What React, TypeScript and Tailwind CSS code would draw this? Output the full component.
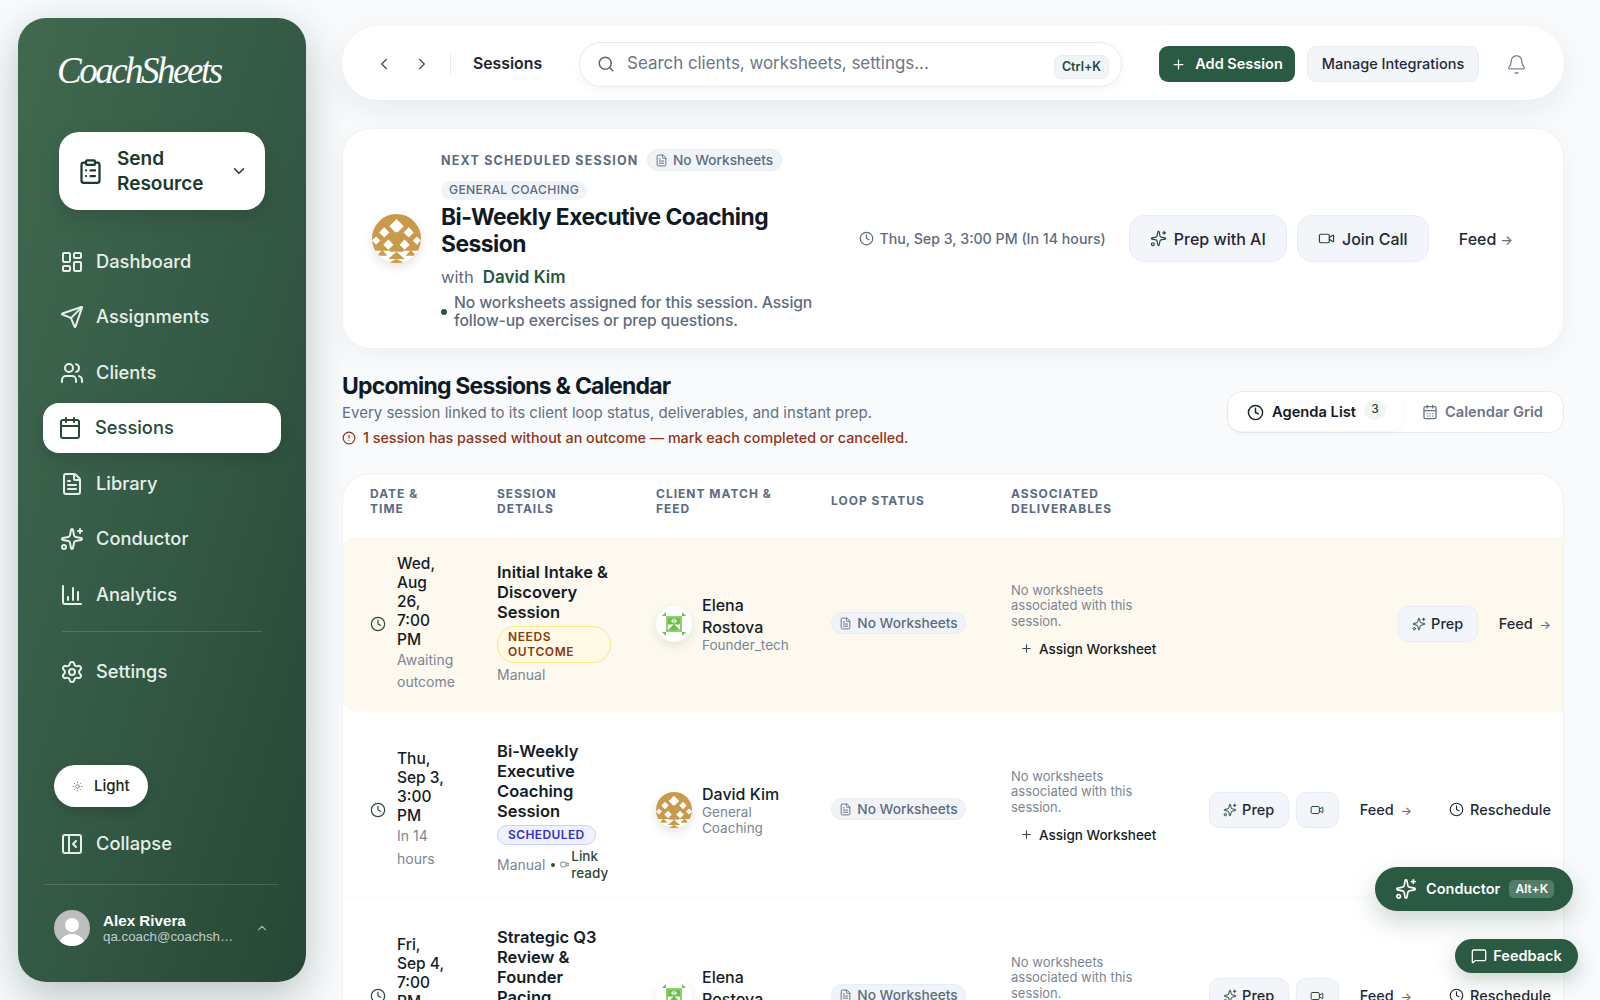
import {
  BarChart3,
  Bell,
  Calendar,
  CalendarDays,
  ChevronDown,
  ChevronLeft,
  ChevronRight,
  ChevronUp,
  CircleAlert,
  ClipboardList,
  Clock,
  FileText,
  LayoutDashboard,
  MessageSquare,
  PanelLeftClose,
  Plus,
  Search,
  Send,
  Settings,
  Sparkles,
  Sun,
  Users,
  Video,
} from "lucide-react";

const whiteDiamonds = [
  [24, 12, 7],
  [12, 18, 5],
  [36, 18, 5],
  [16, 30, 5],
  [32, 30, 5],
  [4, 26, 4],
  [44, 26, 4],
];

function GoldAvatar({ size }: { size: number }) {
  return (
    <div className="rounded-full bg-white shadow-[0_4px_10px_rgba(15,40,30,0.12)] shrink-0 overflow-hidden" style={{ width: size, height: size }}>
      <svg viewBox="0 0 48 48" width={size} height={size}>
        <rect width="48" height="36" fill="#c99a4b" />
        {whiteDiamonds.map(([x, y, r]) => (
          <polygon key={`${x}-${y}`} points={`${x},${y - r} ${x + r},${y} ${x},${y + r} ${x - r},${y}`} fill="#fff" />
        ))}
        <polygon points="24,17 30,24 24,31 18,24" fill="#c99a4b" />
        <polygon points="24,30 31,37 17,37" fill="#c99a4b" />
        <polygon points="24,37 32,44 16,44" fill="#c99a4b" />
        <polygon points="24,44 32,48 16,48" fill="#c99a4b" />
        <polygon points="10,35 15,41 5,41" fill="#c99a4b" />
        <polygon points="38,35 43,41 33,41" fill="#c99a4b" />
      </svg>
    </div>
  );
}

function GreenAvatar() {
  return (
    <div className="rounded-full bg-white shadow-[0_4px_10px_rgba(15,40,30,0.1)] shrink-0 w-[36px] h-[36px]">
      <svg viewBox="0 0 36 36" width="36" height="36">
        <rect x="11" y="11" width="14" height="14" fill="#fff" stroke="#6cc04a" strokeWidth="1.5" />
        <path d="M18 11v14M11 18h14" stroke="#6cc04a" strokeWidth="1" />
        <path d="M12 12 18 18 12 18z M24 12 18 18 24 18z M12 24 18 18 18 24z M24 24 18 18 18 24z M12 12h6l-6 6z M24 12h-6l6 6z" fill="#6cc04a" />
        <path d="M6 10 10 6v4z M30 10 26 6v4z M6 26 10 30v-4z M30 26 26 30v-4z" fill="#6cc04a" />
      </svg>
    </div>
  );
}

function ProfileAvatar() {
  return (
    <div className="w-[36px] h-[36px] rounded-full bg-[#bdbdbd] overflow-hidden shrink-0">
      <svg viewBox="0 0 36 36" width="36" height="36">
        <circle cx="18" cy="15" r="7" fill="#fff" />
        <path d="M5 36c1-9 7-12 13-12s12 3 13 12z" fill="#fff" />
      </svg>
    </div>
  );
}

const navTop = [
  { label: "Dashboard", icon: LayoutDashboard },
  { label: "Assignments", icon: Send },
  { label: "Clients", icon: Users },
  { label: "Sessions", icon: Calendar, active: true },
  { label: "Library", icon: FileText },
  { label: "Conductor", icon: Sparkles },
  { label: "Analytics", icon: BarChart3 },
];

function NavItem({ label, icon: Icon, active }: { label: string; icon: typeof Send; active?: boolean }) {
  if (active) {
    return (
      <div className="flex items-center gap-[13px] h-[50px] rounded-[16px] bg-white pl-[15px] text-[#264a38] shadow-[0_6px_16px_rgba(0,0,0,0.12)]">
        <Icon size={24} strokeWidth={2} />
        <span className="text-[18.3px] font-medium">{label}</span>
      </div>
    );
  }
  return (
    <div className="flex items-center gap-[12px] h-[50px] pl-[17px] text-[#e6efe9]">
      <Icon size={24} strokeWidth={2} />
      <span className="text-[18.3px] font-medium">{label}</span>
    </div>
  );
}

function Sidebar() {
  return (
    <aside className="w-[288px] shrink-0 my-[18px] ml-[18px] rounded-[28px] bg-gradient-to-br from-[#40694f] via-[#345a45] to-[#264735] shadow-[0_14px_40px_rgba(30,60,50,0.28)] flex flex-col px-[25px] pb-[36px]">
      <div className="h-[114px] pl-[14px] pt-[28px] text-white font-['Liberation_Serif',serif] italic text-[37px] leading-[50px] tracking-[-2.5px]">
        CoachSheets
      </div>
      <div className="mx-[16px] h-[78px] rounded-[20px] bg-white flex items-center pl-[18px] pr-[17px] text-[#1c3a2c] shadow-[0_8px_20px_rgba(0,0,0,0.12)]">
        <ClipboardList size={27} strokeWidth={2} className="shrink-0" />
        <span className="ml-[13px] w-[100px] text-[19px] leading-[25px] font-semibold">Send Resource</span>
        <ChevronDown size={18} className="ml-auto" />
      </div>
      <nav className="mt-[26.5px] flex flex-col gap-[5.5px]">
        {navTop.map((n) => (
          <NavItem key={n.label} {...n} />
        ))}
      </nav>
      <div className="mx-[19px] mt-[11px] mb-[15px] h-px bg-white/15" />
      <NavItem label="Settings" icon={Settings} />
      <div className="mt-auto ml-[11px] w-[94px] h-[42px] rounded-full bg-white flex items-center gap-[11px] pl-[18px] text-[#1a2421] text-[15px] font-medium shadow-[0_4px_12px_rgba(0,0,0,0.15)]">
        <Sun size={11} className="text-[#8a8a8a]" />
        Light
      </div>
      <div className="mt-[12px]">
        <NavItem label="Collapse" icon={PanelLeftClose} />
      </div>
      <div className="mx-[2px] mt-[15px] h-px bg-white/15" />
      <div className="mt-[25px] ml-[11px] flex items-center">
        <ProfileAvatar />
        <div className="ml-[13px] w-[134px] font-['Liberation_Sans',sans-serif]">
          <div className="text-[15.2px] leading-[16px] font-bold text-white">Alex Rivera</div>
          <div className="text-[13.3px] leading-[15px] text-[#c0cdc6] truncate">qa.coach@coachsheets.com</div>
        </div>
        <ChevronUp size={14} className="ml-[18px] text-[#9db0a6]" />
      </div>
    </aside>
  );
}

function TopBar() {
  return (
    <header className="h-[74px] rounded-[37px] bg-white shadow-[0_10px_30px_rgba(20,50,40,0.07)] flex items-center pt-[2px] pl-[33px] pr-[37px]">
      <ChevronLeft size={18} className="text-[#4b5563]" />
      <ChevronRight size={18} className="ml-[20px] text-[#4b5563]" />
      <div className="ml-[19px] w-px h-[20px] bg-[#e5e9ee]" />
      <span className="ml-[22px] text-[15.8px] font-semibold text-[#1b2530]">Sessions</span>
      <div className="ml-[37px] w-[543px] h-[45px] rounded-full border border-[#e8ecf1] bg-white flex items-center pl-[17px] pr-[12px] shadow-[0_3px_10px_rgba(20,50,40,0.05)]">
        <Search size={18} className="text-[#5d6876]" />
        <span className="ml-[12px] text-[16.9px] text-[#6b7686]">Search clients, worksheets, settings...</span>
        <span className="ml-auto mt-[6px] w-[55px] h-[24px] rounded-[7px] bg-[#f1f5f8] border border-[#e8edf2] flex items-center justify-center text-[12.5px] font-semibold text-[#264a38]">Ctrl+K</span>
      </div>
      <button className="ml-[37px] w-[136px] h-[36px] rounded-[9px] bg-[#2a5a42] text-white flex items-center justify-center gap-[9px] text-[14.5px] font-semibold">
        <Plus size={15} />
        Add Session
      </button>
      <button className="ml-[12px] w-[172px] h-[36px] rounded-[9px] bg-[#f3f6f9] border border-[#e8edf2] text-[#1f2937] text-[14.5px] font-medium">
        Manage Integrations
      </button>
      <Bell size={21} strokeWidth={1.5} className="ml-[27px] text-[#7c8696]" />
    </header>
  );
}

function WorksheetPill() {
  return (
    <span className="inline-flex items-center justify-center gap-[5px] w-[135px] h-[22px] rounded-full bg-[#f0f4f8] border border-[#e8edf3] text-[13.7px] font-medium text-[#5f6c7e]">
      <FileText size={13} strokeWidth={1.7} />
      No Worksheets
    </span>
  );
}

function Hero() {
  return (
    <section className="mt-[28px] h-[221px] rounded-[28px] bg-white border border-[#eef1f5] shadow-[0_8px_24px_rgba(20,50,40,0.04)] flex items-center pl-[29px] pr-[50px]">
      <GoldAvatar size={49} />
      <div className="ml-[20px] mt-[1px] w-[380px]">
        <div className="flex items-center gap-[8px]">
          <span className="text-[12.5px] font-bold tracking-[1.2px] text-[#5b6b80]">NEXT SCHEDULED SESSION</span>
          <span className="mb-[2px]">
            <WorksheetPill />
          </span>
        </div>
        <span className="mt-[6px] inline-flex items-center h-[19px] px-[8px] rounded-full bg-[#f0f4f8] text-[12.2px] font-medium tracking-[0.3px] text-[#5b6b80]">GENERAL COACHING</span>
        <h2 className="mt-[4px] text-[22.8px] leading-[26.5px] font-bold tracking-[-0.5px] text-[#111a24]">Bi-Weekly Executive Coaching Session</h2>
        <div className="mt-[9px] flex items-center gap-[9px] text-[16.5px] leading-[22px]">
          <span className="text-[#5f6c7e]">with</span>
          <span className="text-[17px] font-semibold text-[#24573e]">David Kim</span>
        </div>
        <div className="mt-[6px] flex items-center gap-[7px]">
          <span className="w-[6px] h-[6px] rounded-full bg-[#24573e] shrink-0" />
          <p className="text-[15.7px] leading-[17.6px] font-medium text-[#5f6c7e] tracking-[-0.1px]">No worksheets assigned for this session. Assign follow-up exercises or prep questions.</p>
        </div>
      </div>
      <div className="ml-auto flex items-center text-[14.2px] font-medium text-[#5f6c7e]">
        <Clock size={15} className="mr-[5px]" />
        Thu, Sep 3, 3:00 PM (In 14 hours)
      </div>
      <button className="ml-[23px] w-[158px] h-[47px] rounded-[15px] bg-[#f2f5f9] border border-[#e8edf3] flex items-center justify-center gap-[7px] text-[16px] font-medium text-[#1f2937]">
        <Sparkles size={17} strokeWidth={1.7} className="text-[#264a38]" />
        Prep with AI
      </button>
      <button className="ml-[10px] w-[132px] h-[47px] rounded-[15px] bg-[#f2f5f9] border border-[#e8edf3] flex items-center justify-center gap-[7px] text-[16px] font-medium text-[#1f2937]">
        <Video size={17} strokeWidth={1.7} className="text-[#264a38]" />
        Join Call
      </button>
      <span className="ml-[30px] text-[16px] font-medium text-[#1f2937] whitespace-nowrap">
        Feed <span className="text-[13px] text-[#5f6c7e]">→</span>
      </span>
    </section>
  );
}

function Heading() {
  return (
    <div className="mt-[23px] flex justify-between">
      <div>
        <h1 className="text-[23px] leading-[28px] font-bold tracking-[-0.8px] text-[#111a24]">Upcoming Sessions &amp; Calendar</h1>
        <p className="mt-[2px] text-[15px] leading-[22px] text-[#64707f]">Every session linked to its client loop status, deliverables, and instant prep.</p>
        <div className="mt-[4px] flex items-center gap-[7px] text-[14.3px] leading-[20px] font-medium text-[#8f3517]">
          <CircleAlert size={14} />
          1 session has passed without an outcome — mark each completed or cancelled.
        </div>
      </div>
      <div className="mt-[19px] w-[337px] h-[42px] rounded-[15px] border border-[#e8ecf1] bg-white flex items-center">
        <div className="w-[175px] h-[38px] flex items-center pl-[19px] rounded-[14px] shadow-[0_2px_5px_rgba(20,50,40,0.05)]">
          <Clock size={17} className="text-[#1a2421]" />
          <span className="ml-[8px] text-[14.7px] font-semibold text-[#111a24]">Agenda List</span>
          <span className="ml-[8px] mb-[4px] w-[22px] h-[20px] rounded-full bg-[#f0f6f3] flex items-center justify-center text-[11.5px] font-medium text-[#2a3a33]">3</span>
        </div>
        <CalendarDays size={16} className="ml-[19px] text-[#6b7686]" />
        <span className="ml-[7px] text-[14.7px] font-semibold text-[#6b7686]">Calendar Grid</span>
      </div>
    </div>
  );
}

const rowGrid = "grid grid-cols-[127px_159px_175px_180px_170px_1fr] items-center pl-[27px]";

type Row = {
  date: string;
  sub: string;
  title: string;
  needsOutcome?: boolean;
  client: string;
  clientSub: string;
  green?: boolean;
  reschedule?: boolean;
};

const rows: Row[] = [
  { date: "Wed, Aug 26, 7:00 PM", sub: "Awaiting outcome", title: "Initial Intake & Discovery Session", needsOutcome: true, client: "Elena Rostova", clientSub: "Founder_tech", green: true },
  { date: "Thu, Sep 3, 3:00 PM", sub: "In 14 hours", title: "Bi-Weekly Executive Coaching Session", client: "David Kim", clientSub: "General Coaching", reschedule: true },
  { date: "Fri, Sep 4, 7:00 PM", sub: "In 2 days", title: "Strategic Q3 Review & Founder Pacing", client: "Elena Rostova", clientSub: "Founder_tech", green: true, reschedule: true },
];

function SessionRow({ row }: { row: Row }) {
  return (
    <div className={`${rowGrid} pr-[12px] border-b border-[#f7f9fb] ${row.needsOutcome ? "bg-[#fdf9ef] rounded-l-[14px]" : "pt-[11px]"}`}>
      <div className={`flex items-center text-[#2d4a3b] ${row.needsOutcome ? "py-[17px]" : "py-[16px]"}`}>
        <Clock size={16} strokeWidth={1.8} className="shrink-0" />
        <div className="ml-[11px] w-[52px]">
          <div className="text-[15.5px] leading-[19px] font-medium text-[#141d27]">{row.date}</div>
          <div className="text-[14px] leading-[22.4px] text-[#7b8695]">{row.sub}</div>
        </div>
      </div>
      <div className={`w-[112px] ${row.needsOutcome ? "py-[24px]" : "pt-[18px] pb-[15px]"}`}>
        <div className="text-[16.5px] leading-[20px] font-semibold text-[#141d27]">{row.title}</div>
        {row.needsOutcome ? (
          <>
            <span className="mt-[4px] inline-block w-[114px] rounded-[18px] border border-[#fde68a] bg-[#fff9e6] px-[10px] py-[2px] text-[12px] leading-[15.4px] font-semibold tracking-[0.6px] text-[#8a3a12]">NEEDS OUTCOME</span>
            <div className="mt-[1px] text-[14px] leading-[22px] text-[#7b8695]">Manual</div>
          </>
        ) : (
          <>
            <span className="mt-[3px] inline-block rounded-full border border-[#c7d2fe] bg-[#eef2ff] px-[10px] text-[12px] leading-[18px] font-semibold tracking-[0.4px] text-[#3730c0]">SCHEDULED</span>
            <div className="mt-[3px] flex items-center">
              <span className="text-[14px] text-[#7b8695]">Manual</span>
              <span className="ml-[6px] w-[4px] h-[4px] rounded-full bg-[#24573e] shrink-0" />
              <Video size={9} className="ml-[5px] text-[#5d7468] shrink-0" />
              <span className="ml-[2px] w-[40px] shrink-0 text-[13.5px] leading-[17px] font-medium text-[#2d4a3b]">Link ready</span>
            </div>
          </>
        )}
      </div>
      <div className="flex items-center">
        {row.green ? <GreenAvatar /> : <GoldAvatar size={36} />}
        <div className="ml-[10px] w-[95px]">
          <div className="text-[16px] leading-[22px] font-medium text-[#141d27]">{row.client}</div>
          <div className="text-[13.5px] leading-[15.5px] text-[#7b8695]">{row.clientSub}</div>
        </div>
      </div>
      <div>
        <WorksheetPill />
      </div>
      <div className="pb-[6px]">
        <p className="w-[125px] text-[13px] leading-[15.7px] text-[#7b8695]">No worksheets associated with this session.</p>
        <div className="mt-[9px] ml-[9px] flex items-center gap-[6px] text-[13.5px] font-medium text-[#141d27]">
          <Plus size={13} className="text-[#3d4a55]" />
          Assign Worksheet
        </div>
      </div>
      <div className="flex items-center justify-end text-[14.5px] font-medium text-[#1f2937] whitespace-nowrap">
        <button className="w-[80px] h-[36px] rounded-[10px] bg-[#f2f5f9] border border-[#e8edf3] flex items-center justify-center gap-[5px]">
          <Sparkles size={14} strokeWidth={1.7} className="text-[#264a38]" />
          Prep
        </button>
        {row.reschedule && (
          <button className="ml-[7px] w-[43px] h-[36px] rounded-[10px] bg-[#f2f5f9] border border-[#e8edf3] flex items-center justify-center text-[#264a38]">
            <Video size={14} strokeWidth={1.7} />
          </button>
        )}
        <span className="ml-[21px]">
          Feed <span className="ml-[3px] text-[12px] text-[#5f6c7e]">→</span>
        </span>
        {row.reschedule && (
          <span className="ml-[37px] flex items-center gap-[6px]">
            <Clock size={15} strokeWidth={1.8} />
            Reschedule
          </span>
        )}
      </div>
    </div>
  );
}

function SessionsTable() {
  return (
    <section className="mt-[25px] rounded-t-[28px] bg-white border border-[#eef1f5]">
      <div className={`${rowGrid} h-[63px] pb-[9px] text-[12px] leading-[15.5px] font-bold tracking-[1px] text-[#5b6b80]`}>
        <div className="w-[80px]">DATE &amp; TIME</div>
        <div className="w-[100px]">SESSION DETAILS</div>
        <div className="w-[130px]">CLIENT MATCH &amp; FEED</div>
        <div>LOOP STATUS</div>
        <div>ASSOCIATED DELIVERABLES</div>
      </div>
      {rows.map((r) => (
        <SessionRow key={r.title} row={r} />
      ))}
    </section>
  );
}

export default function App() {
  return (
    <div className="relative flex h-[1000px] overflow-hidden bg-[#f8fafc] font-['Inter',sans-serif]">
      <Sidebar />
      <main className="ml-[36px] mr-[36px] flex-1 min-w-0 pt-[26px]">
        <TopBar />
        <Hero />
        <Heading />
        <SessionsTable />
      </main>
      <button className="absolute left-[1375px] top-[867px] w-[198px] h-[44px] rounded-full bg-[#2a5a42] text-white flex items-center pl-[20px] shadow-[0_10px_24px_rgba(42,90,66,0.25)]">
        <Sparkles size={22} strokeWidth={1.8} />
        <span className="ml-[9px] text-[14.5px] font-semibold">Conductor</span>
        <span className="ml-[9px] w-[45px] h-[18px] rounded-[5px] bg-white/20 flex items-center justify-center text-[12px] font-semibold">Alt+K</span>
      </button>
      <button className="absolute left-[1455px] top-[939px] w-[123px] h-[34px] rounded-[17px] bg-[#2a5a42] text-white flex items-center justify-center gap-[6px] text-[14.5px] font-semibold shadow-[0_8px_20px_rgba(42,90,66,0.25)]">
        <MessageSquare size={16} />
        Feedback
      </button>
    </div>
  );
}
